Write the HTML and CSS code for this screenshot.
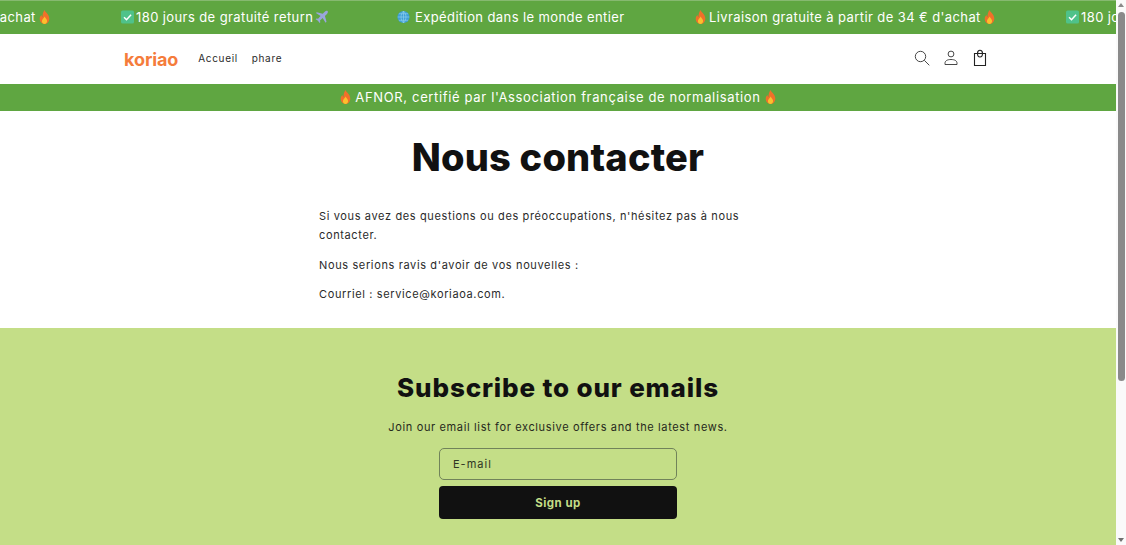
FILE: index.html
```html
<!DOCTYPE html>
<html lang="fr">
<head>
<meta charset="utf-8">
<title>Nous contacter – koriao</title>
<link rel="stylesheet" href="styles.css">
</head>
<body>
<svg class="defs" aria-hidden="true">
  <symbol id="fire" viewBox="0 0 12 14">
    <path fill="#f0702a" d="M6 0c.6 2.200 4.800 4.300 4.800 8.400C10.800 11.600 8.600 14 6 14S1.200 11.800 1.200 8.800c0-1.800.9-3 1.700-3.800.1 1 .5 1.600 1.100 1.900C3.900 4.200 4.800 1.800 6 0z"/>
    <path fill="#fbc02d" d="M6.100 6.500c.4 1.400 2.500 2.500 2.500 4.600C8.600 12.800 7.400 14 6 14s-2.600-1.200-2.600-2.800c0-1.900 2-2.800 2.700-4.700z"/>
  </symbol>
  <symbol id="check" viewBox="0 0 12 12">
    <rect width="12" height="12" rx="1.500" fill="#4fc28a"/>
    <path d="M2.800 6.200l2.300 2.300 4.200-4.600" fill="none" stroke="#fff" stroke-width="1.400"/>
  </symbol>
  <symbol id="plane" viewBox="0 0 14 14">
    <path fill="#9aa6dc" d="M13.500.5c-1-.6-2.200 0-3 .8L8.300 3.500 2 1.800 1 2.800l5 3.200-2.700 2.800-1.800-.3-.8.8 2.500 1.700 1.700 2.500.8-.8-.3-1.800L8.200 8.200l3.200 5 1-1-1.700-6.300 2.200-2.200c.8-.8 1.400-2 .6-3.200z"/>
  </symbol>
  <symbol id="globe" viewBox="0 0 14 14">
    <circle cx="7" cy="7" r="6.500" fill="#3f9fd8"/>
    <path d="M.8 7h12.400M7 .6v12.800M2 3.500h10M2 10.500h10M7 .6C3.500 4 3.500 10 7 13.400M7 .6c3.500 3.400 3.500 9.400 0 12.800" fill="none" stroke="#8fd0ee" stroke-width=".7"/>
  </symbol>
</svg>

<div class="page">
  <div class="content">
    <div class="ticker">
      <div class="ticker-track">
        <div class="tick tick-a"><svg class="emoji"><use href="#fire"/></svg><span class="tick-text">Livraison gratuite à partir de 34 € d'achat</span><svg class="emoji"><use href="#fire"/></svg></div>
        <div class="tick tick-b"><svg class="emoji"><use href="#check"/></svg><span class="tick-text">180 jours de gratuité return</span><svg class="emoji"><use href="#plane"/></svg></div>
        <div class="tick tick-c"><svg class="emoji"><use href="#globe"/></svg><span class="tick-text tick-text-wide">Expédition dans le monde entier</span></div>
        <div class="tick tick-a"><svg class="emoji"><use href="#fire"/></svg><span class="tick-text">Livraison gratuite à partir de 34 € d'achat</span><svg class="emoji"><use href="#fire"/></svg></div>
        <div class="tick tick-b"><svg class="emoji"><use href="#check"/></svg><span class="tick-text">180 jours de gratuité return</span></div>
      </div>
    </div>

    <header class="site-header">
      <div class="header-left">
        <a class="logo">koriao</a>
        <nav class="nav">
          <a class="nav-link">Accueil</a>
          <a class="nav-link">phare</a>
        </nav>
      </div>
      <div class="header-icons">
        <svg class="icon" viewBox="0 0 18 18"><circle cx="7.500" cy="7.500" r="5.200"/><path d="M11.300 11.300l5 5"/></svg>
        <svg class="icon" viewBox="0 0 18 18"><circle cx="9" cy="5" r="2.900"/><path d="M3 15.500v-1.300c0-2.300 2.200-3.700 6-3.700s6 1.400 6 3.700v1.300z"/></svg>
        <svg class="icon icon-bag" viewBox="0 0 18 18"><path d="M3.500 4.500h11v12h-11z"/><path d="M6.500 4.500C6.500 2.500 7.500 1.300 9 1.300s2.500 1.200 2.500 3.200"/><path d="M6.500 4.500c0 2.200 1 3.500 2.500 3.500s2.500-1.300 2.500-3.500"/></svg>
      </div>
    </header>

    <div class="announce"><svg class="emoji"><use href="#fire"/></svg><span class="announce-text">AFNOR, certifié par l'Association française de normalisation</span><svg class="emoji"><use href="#fire"/></svg></div>

    <main class="main">
      <h1 class="title">Nous contacter</h1>
      <div class="copy">
        <p class="copy-p">Si vous avez des questions ou des préoccupations, n'hésitez pas à nous contacter.</p>
        <p class="copy-p">Nous serions ravis d'avoir de vos nouvelles :</p>
        <p class="copy-p">Courriel : service@koriaoa.com.</p>
      </div>
    </main>

    <section class="newsletter">
      <h2 class="news-title">Subscribe to our emails</h2>
      <p class="news-text">Join our email list for exclusive offers and the latest news.</p>
      <div class="field">E-mail</div>
      <button class="signup" type="button">Sign up</button>
    </section>
  </div>

  <div class="scrollbar" aria-hidden="true">
    <span class="arrow arrow-up"></span>
    <span class="thumb"></span>
    <span class="arrow arrow-down"></span>
  </div>
</div>
</body>
</html>
```

FILE: styles.css
```css
* { box-sizing: border-box; }
html, body { margin: 0; height: 100%; overflow: hidden; }
body { font-family: "Inter", "Liberation Sans", sans-serif; color: #121212; background: #fff; }
.defs { position: absolute; width: 0; height: 0; }

.page { display: flex; height: 545px; }
.content { flex: 1; min-width: 0; overflow: hidden; }

.ticker { height: 34px; background: #5fa641; border-top: 1px solid #86b970; overflow: hidden; color: #fff; }
.ticker-track { display: flex; margin-left: -251px; height: 31px; align-items: center; }
.tick { flex: none; display: flex; align-items: center; gap: 2px; font-size: 13px; letter-spacing: .4px; white-space: nowrap; }
.tick-a { width: 372px; }
.tick-b { width: 276px; }
.tick-c { width: 297px; }
.tick-text-wide { margin-left: 3px; }
.emoji { flex: none; width: 13px; height: 14px; }

.site-header { height: 50px; display: flex; align-items: center; justify-content: space-between; padding: 0 127px 2px 124px; }
.header-left { display: flex; align-items: center; }
.logo { font-size: 18px; font-weight: 700; color: #f57c3b; letter-spacing: -.1px; margin-right: 20px; padding-top: 2px; }
.nav { display: flex; gap: 14px; }
.nav-link { font-size: 10px; letter-spacing: .65px; color: #2b2b2b; }
.header-icons { display: flex; gap: 11px; }
.icon { width: 18px; height: 18px; fill: none; stroke: #333; stroke-width: .9; }
.icon-bag { stroke: #222; stroke-width: 1.100; }

.announce { height: 27px; padding-bottom: 2px; background: #5fa641; color: #fff; display: flex; align-items: center; justify-content: center; gap: 3px; font-size: 13px; letter-spacing: .65px; }

.main { height: 217px; padding-top: 22px; }
.title { margin: 0; text-align: center; font-size: 38px; line-height: 48px; font-weight: 800; color: #111; letter-spacing: .2px; }
.copy { width: 480px; margin: 25.700px 0 0 319px; }
.copy-p { margin: 0 0 10px; font-size: 11px; line-height: 19.500px; letter-spacing: .63px; color: #2a2a2a; }

.newsletter { height: 217px; background: #c4de87; display: flex; flex-direction: column; align-items: center; padding-top: 42px; }
.news-title { margin: 0; font-size: 26px; line-height: 36px; font-weight: 800; color: #111; letter-spacing: .85px; }
.news-text { margin: 13px 0 0; font-size: 11px; line-height: 16px; letter-spacing: .64px; color: #26291c; }
.field { width: 238px; height: 32px; margin-top: 13px; border: 1px solid #71835a; border-radius: 5px; padding-left: 13px; font-size: 11px; line-height: 30px; letter-spacing: 1px; color: #2f3524; }
.signup { width: 238px; height: 33px; margin-top: 6px; border: 0; border-radius: 4px; background: #111; color: #c4de87; font-family: inherit; font-size: 11.500px; font-weight: 700; letter-spacing: .5px; }

.scrollbar { flex: none; width: 10px; background: #fafafa; display: flex; flex-direction: column; align-items: center; position: relative; }
.thumb { width: 7px; height: 369px; margin-top: 5px; background: #8a8a8a; border-radius: 4px; }
.arrow { width: 0; height: 0; border-left: 3.500px solid transparent; border-right: 3.500px solid transparent; }
.arrow-up { margin-top: 3px; border-bottom: 4px solid #8a8a8a; }
.arrow-down { position: absolute; bottom: 3px; border-top: 4px solid #707070; }
```
